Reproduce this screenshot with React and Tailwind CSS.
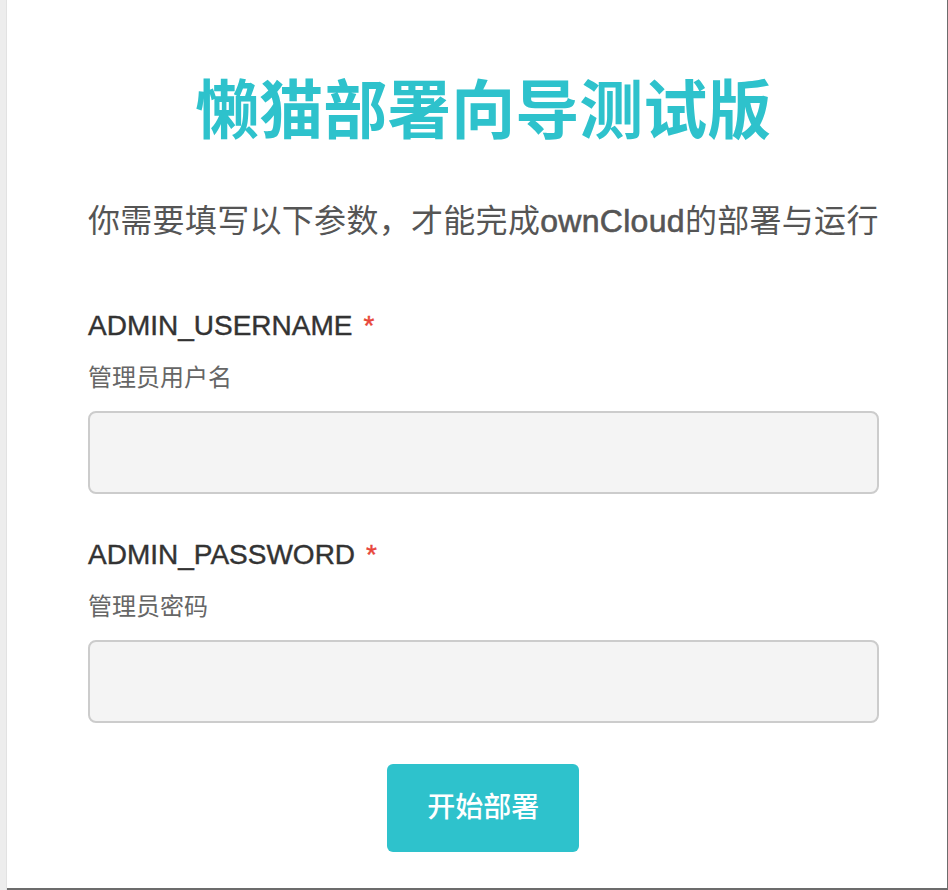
import { useState } from 'react';

const FONT = "font-['Liberation_Sans','Noto_Sans_CJK_SC',sans-serif]";

function Field({ name, hint, type = 'text' }) {
  const [value, setValue] = useState('');
  return (
    <div className="flex flex-col">
      {/* Field key + required mark */}
      <div className="flex items-center h-[28px] text-[28px] leading-[28px] text-[#333] [-webkit-text-stroke:0.4px_#333]">
        <span>{name}</span>
        <span className="ml-[11px] text-[#e8463a] [-webkit-text-stroke:0.4px_#e8463a]">*</span>
      </div>
      <div className="mt-[26px] h-[24px] text-[24px] leading-[24px] text-[#666]">{hint}</div>
      <input
        type={type}
        value={value}
        onChange={(e) => setValue(e.target.value)}
        className="mt-[21px] h-[83px] w-full rounded-[8px] border-2 border-[#cccccc] bg-[#f4f4f4] px-4 text-[24px] text-[#333] outline-none"
      />
    </div>
  );
}

export default function App() {
  return (
    <div className={`flex h-[890px] w-full bg-white ${FONT}`}>
      {/* Left gutter */}
      <div className="w-[7px] shrink-0 bg-[#ededed] border-r border-[#e2e2e2]" />

      {/* Wizard panel */}
      <main className="flex-1 flex flex-col pl-[81px] pr-[68px] pt-[79px] border-r-2 border-b-2 border-[#6c6c6c]">
        <h1 className="h-[64px] text-center text-[64px] leading-[64px] font-bold text-[#2ec2cc]">
          懒猫部署向导测试版
        </h1>

        <p className="mt-[62px] h-[32px] text-[32px] leading-[32px] tracking-[0.3px] text-[#555] whitespace-nowrap">
          你需要填写以下参数，才能完成
          <span className="[-webkit-text-stroke:0.6px_#555]">ownCloud</span>
          的部署与运行
        </p>

        <div className="mt-[75px]">
          <Field name="ADMIN_USERNAME" hint="管理员用户名" />
        </div>

        <div className="mt-[47px]">
          <Field name="ADMIN_PASSWORD" hint="管理员密码" type="password" />
        </div>

        <div className="mt-[41px] flex justify-center">
          <button className="w-[192px] h-[88px] rounded-[6px] bg-[#2ec2cc] text-white text-[28px] font-medium">
            开始部署
          </button>
        </div>
      </main>
    </div>
  );
}
